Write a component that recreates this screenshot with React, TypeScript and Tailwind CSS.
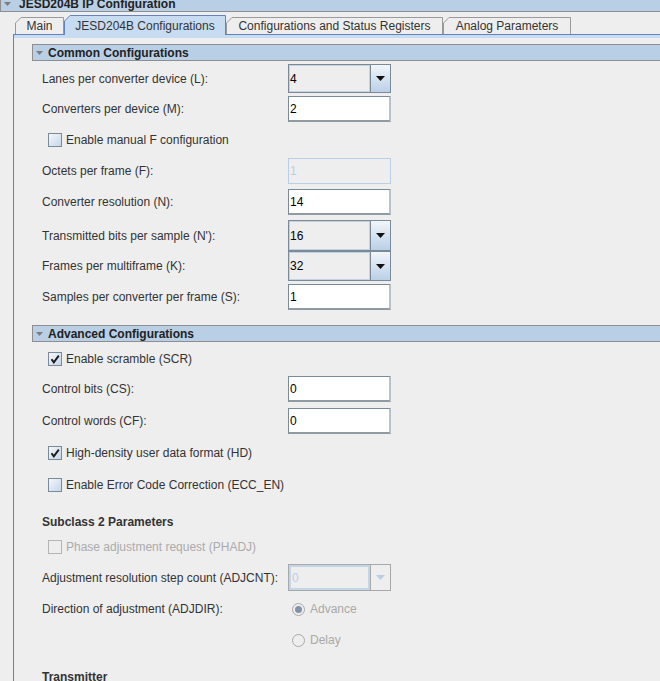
import React from "react"

type TabDef = { label: string; w: number; selected?: boolean }

const tabs: TabDef[] = [
  { label: "Main", w: 49 },
  { label: "JESD204B Configurations", w: 162, selected: true },
  { label: "Configurations and Status Registers", w: 217 },
  { label: "Analog Parameters", w: 128 },
]

function Tri() {
  return (
    <svg width="7" height="4" viewBox="0 0 7 4" className="shrink-0">
      <path d="M0 0H7L3.5 4Z" fill="#7c7c7c" />
    </svg>
  )
}

function Tab({ tab }: { tab: TabDef }) {
  const h = tab.selected ? 20 : 17
  const path = `M0.5 ${h} V6 L6 0.5 H${tab.w - 0.5} V${h}`
  return (
    <div
      className={`relative flex shrink-0 items-center justify-center pt-[1px] text-[#333] ${
        tab.selected ? "z-10 -mb-[1px] h-[20px]" : "h-[17px]"
      }`}
      style={{ width: tab.w }}
    >
      <svg className="absolute inset-0" width={tab.w} height={h}>
        <path
          d={path}
          fill={tab.selected ? "#c8dcf1" : "#eeeeee"}
          stroke={tab.selected ? "#6382bf" : "#9a9a9a"}
        />
      </svg>
      <span className="relative">{tab.label}</span>
    </div>
  )
}

function SectionHeader({ title }: { title: string }) {
  return (
    <div className="flex h-[17px] items-center gap-[5px] border-y border-l border-[#8e8e8e] bg-[#b8cfe5] pl-[3px] font-bold text-[#222]">
      <Tri />
      <span>{title}</span>
    </div>
  )
}

function Field({ value, disabled }: { value: string; disabled?: boolean }) {
  return (
    <div
      className={`flex h-[26px] w-[103px] items-center pl-[1px] ${
        disabled
          ? "border border-[#b8cfe5] text-[#b8cfe5]"
          : "border border-[#7a8a99] border-b-2 border-r-2 border-b-[#8f9aa5] border-r-[#b9c2cb] bg-white text-black"
      }`}
    >
      {value}
    </div>
  )
}

function Combo({ value, disabled }: { value: string; disabled?: boolean }) {
  return (
    <div className={`flex h-full w-[103px] border ${disabled ? "border-[#a8a8a8]" : "border-[#7a8a99]"}`}>
      <div
        className={`flex flex-1 items-center pl-[1px] ${
          disabled
            ? "border-2 border-[#c2d5e9] text-[#b8cfe5]"
            : "bg-[#eeeeee] text-black shadow-[inset_0_0_0_1px_#c3d1e0]"
        }`}
      >
        {value}
      </div>
      <div
        className={`flex w-[20px] items-center justify-center border-l ${
          disabled
            ? "border-[#a8a8a8] bg-[#eeeeee]"
            : "border-[#7a8a99] bg-gradient-to-b from-[#f2f6fa] to-[#bad0e6]"
        }`}
      >
        <svg width="9" height="5" viewBox="0 0 9 5">
          <path d="M0 0H9L4.5 5Z" fill={disabled ? "#b8cfe5" : "#111"} />
        </svg>
      </div>
    </div>
  )
}

function Row({ label, className, children }: { label: string; className: string; children: React.ReactNode }) {
  return (
    <div className={`flex items-center ${className}`}>
      <div className="w-[256px] shrink-0 pl-[10px] text-[#333]">{label}</div>
      {children}
    </div>
  )
}

function Check({
  label,
  checked,
  disabled,
  className,
}: {
  label: string
  checked?: boolean
  disabled?: boolean
  className: string
}) {
  return (
    <div className={`flex items-center gap-[4px] pl-[16px] ${className}`}>
      <div
        className={`flex h-[14px] w-[14px] items-center justify-center border ${
          disabled
            ? "border-[#b4b4b4] bg-[#eeeeee]"
            : "border-[#7a8a99] bg-gradient-to-br from-[#f4f7fb] to-[#c5d6e8]"
        }`}
      >
        {checked && (
          <svg width="10" height="10" viewBox="0 0 10 10">
            <path d="M1.5 5.2 L3.8 8.3 L8.8 1.6" fill="none" stroke="#1a1a1a" strokeWidth="1.9" />
          </svg>
        )}
      </div>
      <span className={disabled ? "text-[#ababab]" : "text-[#333]"}>{label}</span>
    </div>
  )
}

function Radio({ label, selected }: { label: string; selected?: boolean }) {
  return (
    <div className="ml-[4px] flex items-center gap-[5px] text-[#a9a9a9]">
      <div className="flex h-[13px] w-[13px] items-center justify-center rounded-full border border-[#a9a9a9] bg-[#eeeeee]">
        {selected && <div className="h-[7px] w-[7px] rounded-full bg-[#8193aa]" />}
      </div>
      <span>{label}</span>
    </div>
  )
}

export default function App() {
  return (
    <div className="h-[681px] w-[660px] overflow-hidden bg-[#eeeeee] font-['Liberation_Sans',Arial,sans-serif] text-[12px] leading-none">
      {/* title bar */}
      <div className="flex h-[12px] items-start gap-[8px] border-b border-l border-[#8e8e8e] bg-[#b8cfe5] pl-[3px]">
        <div className="pt-[2px]">
          <Tri />
        </div>
        <span className="-mt-[2px] font-bold leading-[12px] text-[#222]">JESD204B IP Configuration</span>
      </div>

      {/* tabs */}
      <div className="flex h-[22px] items-end pl-[15px]">
        {tabs.map((t) => (
          <Tab key={t.label} tab={t} />
        ))}
      </div>

      <div className="ml-[13px] h-[700px] border-l border-t border-[#6382bf]">
        <div className="border-t-[3px] border-[#c8dcf1]">
          <div className="ml-[18px] pt-[6px]">
            <SectionHeader title="Common Configurations" />
            <Row label="Lanes per converter device (L):" className="mt-[3px] h-[29px]">
              <Combo value="4" />
            </Row>
            <Row label="Converters per device (M):" className="mt-[3px] h-[26px]">
              <Field value="2" />
            </Row>
            <Check label="Enable manual F configuration" className="mt-[5px] h-[26px]" />
            <Row label="Octets per frame (F):" className="mt-[5px] h-[26px]">
              <Field value="1" disabled />
            </Row>
            <Row label="Converter resolution (N):" className="mt-[5px] h-[26px]">
              <Field value="14" />
            </Row>
            <Row label="Transmitted bits per sample (N'):" className="mt-[5px] h-[31px]">
              <Combo value="16" />
            </Row>
            <Row label="Frames per multiframe (K):" className="h-[30px]">
              <Combo value="32" />
            </Row>
            <Row label="Samples per converter per frame (S):" className="mt-[3px] h-[26px]">
              <Field value="1" />
            </Row>

            <div className="mt-[15px]">
              <SectionHeader title="Advanced Configurations" />
            </div>
            <Check label="Enable scramble (SCR)" checked className="mt-[4px] h-[26px]" />
            <Row label="Control bits (CS):" className="mt-[4px] h-[26px]">
              <Field value="0" />
            </Row>
            <Row label="Control words (CF):" className="mt-[6px] h-[26px]">
              <Field value="0" />
            </Row>
            <Check label="High-density user data format (HD)" checked className="mt-[6px] h-[26px]" />
            <Check label="Enable Error Code Correction (ECC_EN)" className="mt-[6px] h-[26px]" />

            <div className="mt-[14px] flex h-[20px] items-center pl-[10px] font-bold text-[#333]">
              Subclass 2 Parameters
            </div>
            <Check label="Phase adjustment request (PHADJ)" disabled className="mt-[5px] h-[20px]" />
            <Row label="Adjustment resolution step count (ADJCNT):" className="mt-[7px] h-[27px]">
              <Combo value="0" disabled />
            </Row>
            <Row label="Direction of adjustment (ADJDIR):" className="mt-[8px] h-[20px]">
              <Radio label="Advance" selected />
            </Row>
            <div className="mt-[11px] flex h-[20px] items-center pl-[256px]">
              <Radio label="Delay" />
            </div>
            <div className="mt-[17px] flex h-[20px] items-center pl-[10px] font-bold text-[#333]">
              Transmitter
            </div>
          </div>
        </div>
      </div>
    </div>
  )
}
